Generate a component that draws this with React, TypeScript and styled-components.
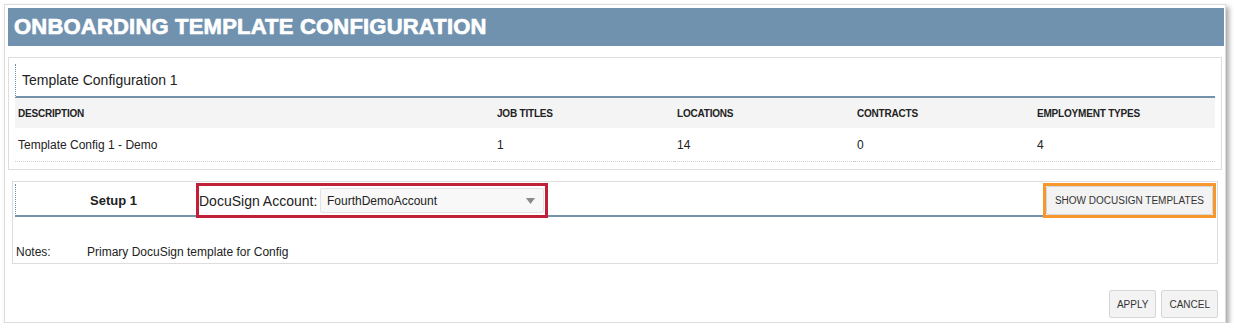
import styled, { createGlobalStyle } from 'styled-components'
import { FC } from 'react'

const GlobalStyle = createGlobalStyle`
  body {
    margin: 0;
    background: #ffffff;
    font-family: "Liberation Sans", Arial, sans-serif;
    color: #222222;
  }
  * {
    box-sizing: border-box;
  }
`

const Card = styled.div`
  margin: 4px 0 0 4px;
  width: 1222px;
  border: 1px solid #dcdcdc;
  padding: 3px 1px 4px 3px;
  background: #ffffff;
  box-shadow: 3px 3px 5px rgba(0, 0, 0, 0.35);
`

const Header = styled.h1`
  margin: 0;
  height: 38px;
  padding: 0 6px;
  display: flex;
  align-items: center;
  background: #7092af;
  color: #ffffff;
  font-size: 22px;
  font-weight: 700;
  letter-spacing: 0.2px;
  -webkit-text-stroke: 0.7px #ffffff;
`

const Panel = styled.div<{ $margin: string; $padding: string }>`
  margin: ${(p) => p.$margin};
  padding: ${(p) => p.$padding};
  border: 1px solid #dddddd;
`

const PanelTitle = styled.div`
  height: 34px;
  display: flex;
  align-items: center;
  padding-left: 6px;
  border-left: 1px dotted #6f8fab;
  border-bottom: 2px solid #7592ab;
  font-size: 14px;
`

const Grid = styled.div`
  display: grid;
  grid-template-columns: 479px 180px 180px 180px 1fr;
`

const HeadCell = styled.div`
  height: 30px;
  display: flex;
  align-items: center;
  padding-left: 3px;
  background: #f4f4f4;
  font-size: 10px;
  font-weight: 700;
  letter-spacing: -0.2px;
`

const Cell = styled.div`
  height: 34px;
  display: flex;
  align-items: center;
  padding-left: 3px;
  border-bottom: 1px dotted #cfcfcf;
  font-size: 12px;
`

const SetupRow = styled.div`
  height: 35px;
  display: flex;
  align-items: stretch;
  position: relative;

  &::after {
    content: '';
    position: absolute;
    left: 0;
    right: 0;
    bottom: 1px;
    height: 2px;
    background: #7592ab;
  }
`

const SetupLabel = styled.div`
  width: 181px;
  margin: 1px 0 2px 0;
  display: flex;
  align-items: center;
  padding-left: 74px;
  border-left: 1px dotted #6f8fab;
  font-size: 13px;
  font-weight: 700;
`

const Highlight = styled.div<{ $color: string }>`
  position: relative;
  z-index: 1;
  display: flex;
  align-items: center;
  border: 3px solid ${(p) => p.$color};
  background: #ffffff;
`

const AccountLabel = styled.span`
  font-size: 14px;
  margin-right: 2px;
  white-space: nowrap;
`

const Select = styled.div`
  width: 224px;
  height: 25px;
  margin-left: auto;
  margin-right: 1px;
  display: flex;
  align-items: center;
  justify-content: space-between;
  padding: 0 8px 0 6px;
  background: #f8f8f8;
  border: 1px solid #e2e2e2;
  border-radius: 2px;
  font-size: 12px;
`

const Spacer = styled.div`
  flex: 1;
`

const Button = styled.button<{ $wide?: boolean }>`
  height: ${(p) => (p.$wide ? '29px' : '28px')};
  padding: 0 ${(p) => (p.$wide ? '8px' : '7px')};
  background: #f3f3f3;
  border: 1px solid #d6d6d6;
  border-radius: 2px;
  color: #333333;
  font-family: "Liberation Sans", Arial, sans-serif;
  font-size: 10px;
  white-space: nowrap;
  cursor: pointer;
`

const NotesRow = styled.div`
  display: flex;
  margin-top: 27px;
  font-size: 12px;
  line-height: 14px;
`

const NotesLabel = styled.span`
  width: 72px;
  padding-left: 1px;
`

const Footer = styled.div`
  display: flex;
  justify-content: flex-end;
  gap: 5px;
  margin-top: 26px;
  padding-right: 6px;
`

const columns = ['DESCRIPTION', 'JOB TITLES', 'LOCATIONS', 'CONTRACTS', 'EMPLOYMENT TYPES']
const rows = [['Template Config 1 - Demo', '1', '14', '0', '4']]

const App: FC = () => {
    return (
        <>
            <GlobalStyle />
            <Card>
                <Header>ONBOARDING TEMPLATE CONFIGURATION</Header>
                <Panel $margin={'11px 2px 0 0'} $padding={'6px 6px 7px 6px'}>
                    <PanelTitle>Template Configuration 1</PanelTitle>
                    <Grid>
                        {columns.map((c) => (
                            <HeadCell key={c}>{c}</HeadCell>
                        ))}
                        {rows.map((r) =>
                            r.map((v, i) => <Cell key={i}>{v}</Cell>)
                        )}
                    </Grid>
                </Panel>
                <Panel $margin={'11px 6px 0 4px'} $padding={'1px 1px 4px 2px'}>
                    <SetupRow>
                        <SetupLabel>Setup 1</SetupLabel>
                        <Highlight $color={'#c21f39'} style={{ width: 352 }}>
                            <AccountLabel>DocuSign Account:</AccountLabel>
                            <Select>
                                FourthDemoAccount
                                <svg width="9" height="6" viewBox="0 0 9 6">
                                    <path d="M0 0 H9 L4.5 6 Z" fill="#8a8a8a" />
                                </svg>
                            </Select>
                        </Highlight>
                        <Spacer />
                        <Highlight $color={'#f7982f'}>
                            <Button $wide>SHOW DOCUSIGN TEMPLATES</Button>
                        </Highlight>
                    </SetupRow>
                    <NotesRow>
                        <NotesLabel>Notes:</NotesLabel>
                        <span>Primary DocuSign template for Config</span>
                    </NotesRow>
                </Panel>
                <Footer>
                    <Button>APPLY</Button>
                    <Button>CANCEL</Button>
                </Footer>
            </Card>
        </>
    )
}

export default App
